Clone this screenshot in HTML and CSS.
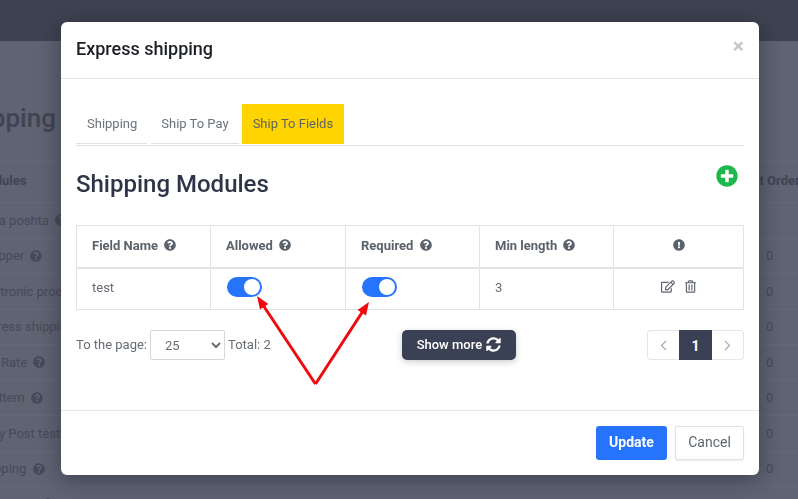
FILE: index.html

```html
<!DOCTYPE html>
<html lang="en">
<head>
  <meta charset="UTF-8">
  <title>Express shipping</title>
  <link rel="stylesheet" href="styles.css">
</head>
<body>
  <svg class="defs" width="0" height="0">
    <symbol id="i-question" viewBox="0 0 512 512"><path d="M504 256c0 136.997-111.043 248-248 248S8 392.997 8 256C8 119.083 119.043 8 256 8s248 111.083 248 248zM262.655 90c-54.497 0-89.255 22.957-116.549 63.758-3.536 5.286-2.353 12.415 2.715 16.258l34.699 26.31c5.205 3.947 12.621 3.008 16.665-2.122 17.864-22.658 30.113-35.797 57.303-35.797 20.429 0 45.698 13.148 45.698 32.958 0 14.976-12.363 22.667-32.534 33.976C247.128 238.528 216 254.941 216 296v4c0 6.627 5.373 12 12 12h56c6.627 0 12-5.373 12-12v-1.333c0-28.462 83.186-29.647 83.186-106.667 0-58.002-60.165-102-116.531-102zM256 338c-25.365 0-46 20.635-46 46 0 25.364 20.635 46 46 46s46-20.636 46-46c0-25.365-20.635-46-46-46z"/></symbol>
    <symbol id="i-exclaim" viewBox="0 0 512 512"><path d="M504 256c0 136.997-111.043 248-248 248S8 392.997 8 256C8 119.083 119.043 8 256 8s248 111.083 248 248zm-248 50c-25.405 0-46 20.595-46 46s20.595 46 46 46 46-20.595 46-46-20.595-46-46-46zm-43.673-165.346l7.418 136c.347 6.364 5.609 11.346 11.982 11.346h48.546c6.373 0 11.635-4.982 11.982-11.346l7.418-136c.375-6.874-5.098-12.654-11.982-12.654h-63.383c-6.884 0-12.356 5.78-11.981 12.654z"/></symbol>
    <symbol id="i-plus" viewBox="0 0 512 512"><path d="M256 8C119 8 8 119 8 256s111 248 248 248 248-111 248-248S393 8 256 8zm144 276c0 6.6-5.4 12-12 12h-92v92c0 6.6-5.4 12-12 12h-56c-6.6 0-12-5.4-12-12v-92h-92c-6.6 0-12-5.4-12-12v-56c0-6.6 5.4-12 12-12h92v-92c0-6.6 5.4-12 12-12h56c6.6 0 12 5.4 12 12v92h92c6.6 0 12 5.4 12 12v56z"/></symbol>
    <symbol id="i-sync" viewBox="0 0 512 512"><path d="M370.72 133.28C339.458 104.008 298.888 87.962 255.848 88c-77.458.068-144.328 53.178-162.791 126.85-1.344 5.363-6.122 9.15-11.651 9.15H24.103c-7.498 0-13.194-6.807-11.807-14.176C33.933 94.924 134.813 8 256 8c66.448 0 126.791 26.136 171.315 68.685L463.03 40.97C478.149 25.851 504 36.559 504 57.941V192c0 13.255-10.745 24-24 24H345.941c-21.382 0-32.09-25.851-16.971-40.971l41.75-41.749zM32 296h134.059c21.382 0 32.09 25.851 16.971 40.971l-41.75 41.75c31.262 29.273 71.835 45.319 114.876 45.28 77.418-.07 144.315-53.144 162.787-126.849 1.344-5.363 6.122-9.15 11.651-9.15h57.304c7.498 0 13.194 6.807 11.807 14.176C478.067 417.076 377.187 504 256 504c-66.448 0-126.791-26.136-171.315-68.685L48.97 471.03C33.851 486.149 8 475.441 8 454.059V320c0-13.255 10.745-24 24-24z"/></symbol>
    <symbol id="i-edit" viewBox="0 0 576 512"><path d="M402.3 344.9l32-32c5-5 13.7-1.5 13.7 5.7V464c0 26.5-21.5 48-48 48H48c-26.5 0-48-21.5-48-48V112c0-26.5 21.5-48 48-48h273.5c7.1 0 10.7 8.6 5.7 13.7l-32 32c-1.5 1.5-3.5 2.3-5.7 2.3H48v352h352V350.5c0-2.1.8-4.1 2.3-5.6zm156.6-201.8L296.3 405.7l-90.4 10c-26.2 2.9-48.5-19.2-45.6-45.6l10-90.4L432.9 17.1c22.9-22.9 59.9-22.9 82.7 0l43.2 43.2c22.9 22.9 22.9 60 .1 82.8zM460.1 174L402 115.9 216.2 301.8l-7.3 65.3 65.3-7.3L460.1 174zm64.8-79.7l-43.2-43.2c-4.1-4.1-10.8-4.1-14.8 0L436 82l58.1 58.1 30.9-30.9c4-4.2 4-10.8-.1-14.9z"/></symbol>
    <symbol id="i-trash" viewBox="0 0 448 512"><path d="M268 416h24a12 12 0 0 0 12-12V188a12 12 0 0 0-12-12h-24a12 12 0 0 0-12 12v216a12 12 0 0 0 12 12zM432 80h-82.41l-34-56.7A48 48 0 0 0 274.41 0H173.59a48 48 0 0 0-41.16 23.3L98.41 80H16A16 16 0 0 0 0 96v16a16 16 0 0 0 16 16h16v336a48 48 0 0 0 48 48h288a48 48 0 0 0 48-48V128h16a16 16 0 0 0 16-16V96a16 16 0 0 0-16-16zM171.84 50.91A6 6 0 0 1 177 48h94a6 6 0 0 1 5.15 2.91L293.61 80H154.39zM368 464H80V128h288zm-212-48h24a12 12 0 0 0 12-12V188a12 12 0 0 0-12-12h-24a12 12 0 0 0-12 12v216a12 12 0 0 0 12 12z"/></symbol>
  </svg>

  <!-- page behind the dialog -->
  <div class="topbar"></div>
  <div class="page">
    <div class="page-title">Shipping</div>
    <div class="bg-table">
      <div class="bg-row bg-head"><span>Modules</span><span class="bg-num">Sort Order</span></div>
      <div class="bg-row"><span>Nova poshta <svg class="ico"><use href="#i-question"/></svg></span><span class="bg-num"></span></div>
      <div class="bg-row"><span>Shopper <svg class="ico"><use href="#i-question"/></svg></span><span class="bg-num">0</span></div>
      <div class="bg-row"><span>Electronic products</span><span class="bg-num">0</span></div>
      <div class="bg-row"><span>Express shipping</span><span class="bg-num">0</span></div>
      <div class="bg-row"><span>Flat Rate <svg class="ico"><use href="#i-question"/></svg></span><span class="bg-num">0</span></div>
      <div class="bg-row"><span>Per Item <svg class="ico"><use href="#i-question"/></svg></span><span class="bg-num">0</span></div>
      <div class="bg-row"><span>Novy Post test</span><span class="bg-num">0</span></div>
      <div class="bg-row"><span>Shipping <svg class="ico"><use href="#i-question"/></svg></span><span class="bg-num">0</span></div>
      <div class="bg-row"><span>Ukrposhta <svg class="ico"><use href="#i-question"/></svg></span><span class="bg-num"></span></div>
    </div>
  </div>

  <div class="modal">
    <div class="modal-header">
      <div class="modal-title">Express shipping</div>
      <div class="close">×</div>
    </div>

    <div class="modal-body">
      <div class="tabs">
        <div class="tab">Shipping</div>
        <div class="tab">Ship To Pay</div>
        <div class="tab active">Ship To Fields</div>
      </div>

      <div class="heading-row">
        <h2>Shipping Modules</h2>
        <svg class="add"><use href="#i-plus"/></svg>
      </div>

      <table class="fields">
        <tr>
          <th class="c1">Field Name <svg class="ico"><use href="#i-question"/></svg></th>
          <th class="c2">Allowed <svg class="ico"><use href="#i-question"/></svg></th>
          <th class="c3">Required <svg class="ico"><use href="#i-question"/></svg></th>
          <th class="c4">Min length <svg class="ico"><use href="#i-question"/></svg></th>
          <th class="c5"><svg class="ico"><use href="#i-exclaim"/></svg></th>
        </tr>
        <tr>
          <td>test</td>
          <td><span class="toggle"><span class="knob"></span></span></td>
          <td><span class="toggle"><span class="knob"></span></span></td>
          <td>3</td>
          <td class="actions">
            <svg class="edit"><use href="#i-edit"/></svg>
            <svg class="trash"><use href="#i-trash"/></svg>
          </td>
        </tr>
      </table>

      <div class="pager-row">
        <div class="per-page">
          <span>To the page:</span>
          <select><option>25</option></select>
          <span>Total: 2</span>
        </div>
        <button class="show-more">Show more <svg class="sync"><use href="#i-sync"/></svg></button>
        <div class="pagination">
          <span class="page-btn"><svg class="chev" viewBox="0 0 7 11"><path d="M6 1L1.5 5.5L6 10"/></svg></span>
          <span class="page-btn current">1</span>
          <span class="page-btn"><svg class="chev" viewBox="0 0 7 11"><path d="M1 1L5.5 5.5L1 10"/></svg></span>
        </div>
      </div>
    </div>

    <div class="modal-footer">
      <button class="btn-update">Update</button>
      <button class="btn-cancel">Cancel</button>
    </div>
  </div>

  <!-- red annotation arrows -->
  <svg class="arrows" width="798" height="499" viewBox="0 0 798 499">
    <g stroke="#ee0a0e" stroke-width="3" fill="none">
      <path d="M315.5 384L263 305"/>
      <path d="M315.5 384L363 311"/>
    </g>
    <g fill="#ee0a0e">
      <path d="M257 296L268.4 304L260 309.6Z"/>
      <path d="M369 302L366 315.6L357.6 310Z"/>
    </g>
  </svg>
</body>
</html>
```

FILE: styles.css

```css
html, body {
  margin: 0;
  height: 100%;
}

body {
  background-color: #5f6372;
  font-family: Roboto, "Liberation Sans", sans-serif;
  font-size: 13px;
  color: #5b626c;
  overflow: hidden;
}

.defs {
  display: block;
}

.ico {
  width: 12px;
  height: 12px;
  fill: currentColor;
  vertical-align: -1.5px;
  margin-left: 3px;
}

/* page behind the dialog */
.topbar {
  height: 41px;
  background-color: #3e4251;
}

.page {
  color: #3f4454;
  margin-left: -24px;
  width: 923px;
}

.page-title {
  font-size: 26px;
  font-weight: 500;
  margin-left: -22px;
  height: 120px;
  padding-top: 62px;
  box-sizing: border-box;
  line-height: 30px;
}

.bg-row {
  display: flex;
  justify-content: space-between;
  align-items: center;
  height: 35.5px;
  color: #454a5a;
  border-top: 1px solid #646877;
  box-sizing: border-box;
}

.bg-head {
  height: 41px;
  padding-bottom: 3px;
  font-weight: 700;
  color: #3f4454;
}

.bg-num {
  width: 133px;
  white-space: nowrap;
}

.bg-head .bg-num {
  text-indent: -27px;
}

/* dialog */
.modal {
  position: fixed;
  left: 61px;
  top: 22px;
  width: 698px;
  height: 453px;
  background-color: #fff;
  border-radius: 6px;
  box-shadow: 0 4px 22px rgba(20, 22, 32, 0.45);
  display: flex;
  flex-direction: column;
}

.modal-header {
  display: flex;
  justify-content: space-between;
  align-items: center;
  height: 52px;
  padding: 0 15px 4px;
  border-bottom: 1px solid #e4e7e9;
}

.modal-title {
  font-size: 18px;
  font-weight: 500;
  color: #1c1f24;
}

.close {
  font-size: 21px;
  font-weight: 700;
  color: #c4c6c8;
  margin-top: -4px;
}

.modal-body {
  flex: 1;
  padding: 25px 15px 0;
}

.tabs {
  display: flex;
  height: 41px;
  border-bottom: 1px solid #dee2e4;
}

.tab {
  height: 39px;
  line-height: 39px;
  padding: 0 10px;
  margin-right: 4px;
  border-bottom: 1px solid #dde3e5;
  color: #6b737b;
}

.tab:first-child {
  padding-left: 11px;
}

.tab:nth-child(2) {
  margin-right: 3px;
}

.tab.active {
  padding: 0 11px;
  background-color: #ffd400;
  color: #5f6360;
  border-bottom: 1px solid #ffd400;
  margin-right: 0;
}

.heading-row {
  display: flex;
  justify-content: space-between;
  height: 79px;
}

h2 {
  margin: 23px 0 0;
  font-size: 24px;
  font-weight: 500;
  line-height: 30px;
  color: #2e3547;
}

.add {
  width: 22px;
  height: 22px;
  fill: #1cb84c;
  margin: 19px 6px 0 0;
}

.fields {
  width: 668px;
  border-collapse: collapse;
  table-layout: fixed;
}

.fields th,
.fields td {
  box-sizing: border-box;
  border: 1px solid #e1e3e5;
  padding: 0 15px;
  text-align: left;
}

.fields th {
  height: 42px;
  padding-bottom: 2px;
  border-bottom-width: 2px;
  font-weight: 700;
  color: #5a626c;
}

.fields td {
  height: 42px;
  padding-bottom: 2px;
  color: #666d75;
}

.c1 { width: 134px; }
.c2 { width: 135px; }
.c3 { width: 134px; }
.c4 { width: 134px; }

.fields .c5,
.fields .actions {
  text-align: center;
}

.c5 .ico {
  margin-left: 0;
}

.toggle {
  display: flex;
  justify-content: flex-end;
  align-items: center;
  width: 35px;
  height: 20px;
  margin: 0 0 2px 1px;
  padding: 0 2px;
  box-sizing: border-box;
  border-radius: 10px;
  background-color: #2674fb;
}

.knob {
  width: 16px;
  height: 16px;
  border-radius: 50%;
  background-color: #fff;
}

.edit {
  width: 14px;
  height: 13px;
  fill: #5f666e;
  margin-right: 7px;
  vertical-align: -1px;
}

.trash {
  width: 11px;
  height: 13px;
  fill: #5f666e;
  vertical-align: -1px;
}

.pager-row {
  display: grid;
  grid-template-columns: 326px 114px 1fr;
  align-items: center;
  margin-top: 20px;
  height: 30px;
}

.per-page {
  display: flex;
  align-items: center;
  gap: 3px;
  color: #666d75;
}

.per-page span {
  margin-top: -2px;
}

select {
  width: 75px;
  height: 30px;
  padding-left: 10px;
  border: 1px solid #d5d8da;
  border-radius: 2px;
  background-color: #fff;
  font-family: Roboto, "Liberation Sans", sans-serif;
  font-size: 13px;
  color: #666d75;
}

.show-more {
  height: 30px;
  padding: 0 0 2px;
  border: 0;
  border-radius: 5px;
  background-color: #3a4154;
  color: #fff;
  font-family: Roboto, "Liberation Sans", sans-serif;
  font-size: 13px;
  font-weight: 500;
  box-shadow: 0 2px 6px rgba(50, 56, 72, 0.25);
}

.sync {
  width: 15px;
  height: 15px;
  margin-left: 1px;
  fill: #fff;
  vertical-align: -3px;
}

.pagination {
  display: flex;
  justify-content: flex-end;
}

.page-btn {
  box-sizing: border-box;
  display: flex;
  align-items: center;
  justify-content: center;
  width: 32px;
  height: 30px;
  border: 1px solid #e4e6e8;
}

.page-btn:first-child {
  border-radius: 4px 0 0 4px;
  border-right: 0;
}

.page-btn:last-child {
  border-radius: 0 4px 4px 0;
  border-left: 0;
}

.page-btn.current {
  width: 33px;
  padding-top: 1px;
  background-color: #3a4154;
  border-color: #3a4154;
  color: #fff;
  font-size: 14px;
  font-weight: 700;
}

.chev {
  width: 7px;
  height: 11px;
  fill: none;
  stroke: #a6abb0;
  stroke-width: 1.2;
}

.modal-footer {
  display: flex;
  justify-content: flex-end;
  gap: 8px;
  height: 65px;
  padding: 15px 15px 0;
  box-sizing: border-box;
  border-top: 1px solid #e4e7e9;
}

.modal-footer button {
  height: 34px;
  padding: 0 0 2px;
  font-family: Roboto, "Liberation Sans", sans-serif;
  font-size: 14px;
}

.btn-update {
  width: 71px;
  border: 0;
  border-radius: 3px;
  background-color: #2674fb;
  color: #fff;
  font-weight: 700;
}

.btn-cancel {
  width: 69px;
  border: 1px solid #dfe2e4;
  border-radius: 2px;
  background-color: #fff;
  color: #5f666e;
  box-shadow: 0 1px 2px rgba(0, 0, 0, 0.08);
}

.arrows {
  position: fixed;
  left: 0;
  top: 0;
  pointer-events: none;
}
```
